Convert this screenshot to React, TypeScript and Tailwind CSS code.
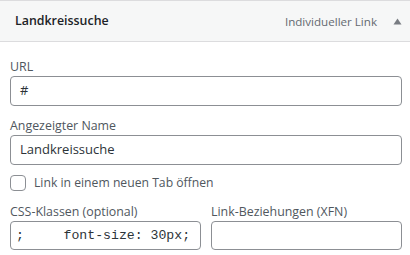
import React from 'react'

const App = () => {
  return (
    <div className="w-[410px] h-[255px] bg-white overflow-hidden text-[#2c3338]" style={{ fontFamily: '"Open Sans", "Noto Sans", sans-serif' }}>
      <div className="h-[42px] border-t border-b border-[#dcdcde] bg-[#f6f7f7] flex items-center pl-[15px] pr-[7px]">
        <span className="text-[12.4px] font-semibold text-[#1d2327] pt-[1px]">Landkreissuche</span>
        <span className="ml-auto text-[11.6px] text-[#646970] pt-[1px]">Individueller Link</span>
        <svg width="9" height="7" viewBox="0 0 9 7" className="ml-[16px] mr-[1px]">
          <path d="M0.5 6.5 L4.5 0.5 L8.5 6.5 Z" fill="#787c82" />
        </svg>
      </div>

      <div className="pl-[10px] pr-[8px] pt-[16px]">
        <label className="block text-[12.4px] leading-[18px] text-[#50575e]">URL</label>
        <div className="h-[30px] border border-[#8c8f94] rounded-[4px] flex items-center px-[9px] text-[13px]">#</div>

        <label className="block mt-[11px] text-[12.4px] leading-[18px] text-[#50575e]">Angezeigter Name</label>
        <div className="h-[30px] border border-[#8c8f94] rounded-[4px] flex items-center px-[9px] text-[13px]">Landkreissuche</div>

        <div className="mt-[10px] flex items-center h-[16px]">
          <span className="w-4 h-4 border border-[#8c8f94] rounded-[4px] bg-white" />
          <span className="ml-[8px] text-[12.2px] text-[#50575e]">Link in einem neuen Tab öffnen</span>
        </div>

        <div className="mt-[12px] grid grid-cols-2 gap-[10px]">
          <div>
            <label className="block text-[12.4px] leading-[18px] text-[#50575e]">CSS-Klassen (optional)</label>
            <div className="h-[29px] border border-[#8c8f94] rounded-[4px] flex items-center px-[5px] text-[13.2px] whitespace-pre overflow-hidden" style={{ fontFamily: '"Liberation Mono", monospace' }}>{';     font-size: 30px;'}</div>
          </div>
          <div>
            <label className="block text-[12.4px] leading-[18px] text-[#50575e]">Link-Beziehungen (XFN)</label>
            <div className="h-[29px] border border-[#8c8f94] rounded-[4px]" />
          </div>
        </div>
      </div>
    </div>
  )
}

export default App
